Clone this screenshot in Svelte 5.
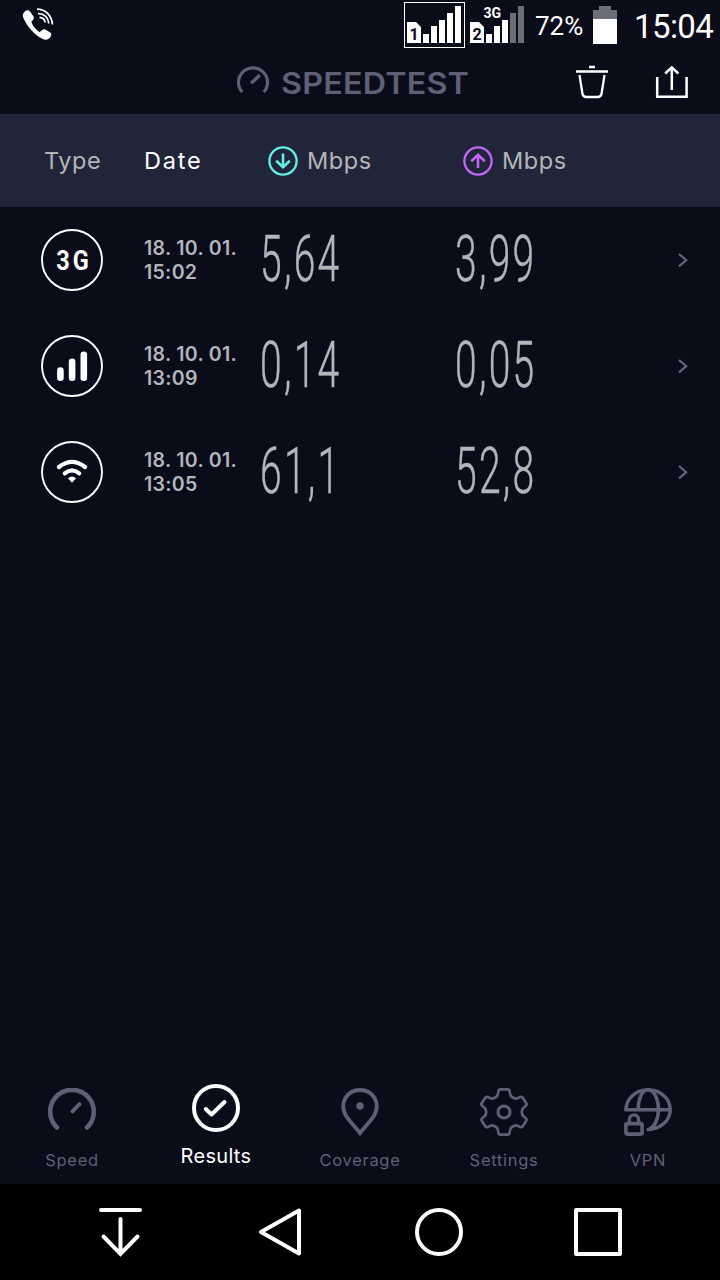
<script>
	const results = [
		{ type: '3g', date: '18. 10. 01.', time: '15:02', down: '5,64', up: '3,99' },
		{ type: 'cell', date: '18. 10. 01.', time: '13:09', down: '0,14', up: '0,05' },
		{ type: 'wifi', date: '18. 10. 01.', time: '13:05', down: '61,1', up: '52,8' }
	];

	const tabs = [
		{ id: 'speed', label: 'Speed' },
		{ id: 'results', label: 'Results' },
		{ id: 'coverage', label: 'Coverage' },
		{ id: 'settings', label: 'Settings' },
		{ id: 'vpn', label: 'VPN' }
	];

	let active = $state('results');
</script>

<div class="screen">
	<div class="status">
		<svg class="call" width="34" height="34" viewBox="0 0 34 34" fill="none">
			<path d="M3 4.5C4.5 2.3 7.5 1.4 8.8 3.2L12.6 8.5C13.5 10.2 12.2 12.2 10.4 13.6C11.3 18 15.3 22.4 18.8 24.2C20.5 22.2 22.5 20.6 24.3 21.5L29.6 24.7C31.2 26 29.9 28.8 28 30.6C26.3 32.2 23.5 31.9 20.8 30.4C13 26.5 5.5 17.5 2.2 9.4C1.4 7.2 1.8 5.8 3 4.5Z" fill="#fff"/>
			<path d="M16 1.2C24.5 1.2 30.6 7.5 31.5 16.5M17 5.5C23.5 5.8 27 9.5 27.8 15.5M18.5 9.3C22 9.6 23.8 11.3 24.2 14.5" stroke="#fff" stroke-width="1.7"/>
		</svg>
		<div class="indicators">
			<svg width="126" height="50" viewBox="0 0 126 50">
				<rect x="4.5" y="2.5" width="60" height="45" fill="none" stroke="#fff"/>
				<path d="M7 22h9l5 5v16H7zM23 34h6v9h-6zM31 26h6v17h-6zM39 20h6v23h-6zM47 13h6v30h-6zM55 6h6v37h-6z" fill="#fff"/>
				<path d="M70 22h9l5 5v16H70zM86 34h6v9h-6zM94 26h6v17h-6zM102 20h6v23h-6z" fill="#fff"/>
				<path d="M110 13h6v30h-6zM118 6h6v37h-6z" fill="#6c6d76"/>
				<text class="sim" x="9.5" y="40">1</text>
				<text class="sim" x="72.5" y="40">2</text>
				<text class="net" x="83.5" y="18">3G</text>
			</svg>
			<span class="percent">72%</span>
			<svg class="battery" width="24" height="38" viewBox="0 0 24 38">
				<path d="M6 0h12v4h6v9H0V4h6z" fill="#6c6d76"/>
				<rect y="13" width="24" height="25" fill="#fff"/>
			</svg>
			<span class="clock">15:04</span>
		</div>
	</div>

	<header class="topbar">
		<div class="brand">
			<svg width="34" height="32" viewBox="0 0 34 32" fill="none" stroke="currentColor" stroke-width="3.2">
				<path d="M6.2 26A14.5 14.5 0 1 1 27.8 26"/>
				<path d="M15.2 17.3L23.8 9" stroke-width="3.4"/>
			</svg>
			<h1>SPEEDTEST</h1>
		</div>
		<div class="actions">
			<button aria-label="Delete">
				<svg width="34" height="34" viewBox="0 0 34 34" fill="none" stroke="#fff" stroke-width="2.3">
					<path d="M1 6.5h32M14 2h6"/>
					<path d="M4.5 10L7.4 28.5Q8 32 11.5 32H22.5Q26 32 26.6 28.5L29.5 10"/>
				</svg>
			</button>
			<button aria-label="Share">
				<svg width="34" height="34" viewBox="0 0 34 34" fill="none" stroke="#fff" stroke-width="2.5">
					<path d="M2.2 12v19.8h29.4V12M16.8 25V2.5M10.2 8.5L16.8 2.4L23.4 8.5"/>
				</svg>
			</button>
		</div>
	</header>

	<div class="row head">
		<span class="col-type">Type</span>
		<span class="sorted">Date</span>
		<span class="unit">
			<svg width="30" height="30" viewBox="0 0 30 30" fill="none" stroke="#62efe3" stroke-width="2.3">
				<circle cx="15" cy="15" r="13.6"/>
				<path d="M15 7.5v14M8.2 14.8L15 21.3L21.8 14.8" stroke-width="2.6"/>
			</svg>
			Mbps
		</span>
		<span class="unit">
			<svg width="30" height="30" viewBox="0 0 30 30" fill="none" stroke="#c166f2" stroke-width="2.3">
				<circle cx="15" cy="15" r="13.6"/>
				<path d="M15 22V8.5M8.2 15.2L15 8.7L21.8 15.2" stroke-width="2.6"/>
			</svg>
			Mbps
		</span>
	</div>

	<main>
		{#each results as r}
			<div class="row result">
				<svg class="type" width="62" height="62" viewBox="0 0 62 62" fill="none" stroke="#fff">
					<circle cx="31" cy="31" r="30" stroke-width="1.9"/>
					{#if r.type === '3g'}
						<text class="type-text" transform="translate(15.3 41) scale(0.84 1)">3G</text>
					{:else if r.type === 'cell'}
						<path d="M19.4 35.5v7.3M31.1 26.8v16M42.8 19.8v23" stroke-width="6.6" stroke-linecap="round"/>
					{:else}
						<path d="M17.9 26Q31 15.7 44.1 26M23.8 32.4Q31 26.4 38.2 32.4" stroke-width="4.2" stroke-linecap="round"/>
						<path d="M27 37.4Q31 33.6 35 37.4L31 41.8Z" fill="#fff" stroke="none"/>
					{/if}
				</svg>
				<div class="when">
					<div>{r.date}</div>
					<div>{r.time}</div>
				</div>
				<span class="value">{r.down}</span>
				<span class="value">{r.up}</span>
				<svg class="chevron" width="12" height="16" viewBox="0 0 12 16" fill="none" stroke="#63647a" stroke-width="2.2">
					<path d="M2 2L9.2 8.2L2 14.4"/>
				</svg>
			</div>
		{/each}
	</main>

	<nav class="tabs">
		{#each tabs as tab}
			<button class="tab" class:active={active === tab.id} onclick={() => (active = tab.id)}>
				<svg width="48" height="48" viewBox="0 0 48 48" fill="none" stroke="currentColor" stroke-width="4" stroke-linecap="round" stroke-linejoin="round">
					{#if tab.id === 'speed'}
						<path d="M9 39.5A21.8 21.8 0 1 1 39 39.5" stroke-width="4.6"/>
						<path d="M24.5 23.3L31.5 16.2"/>
					{:else if tab.id === 'results'}
						<circle cx="24" cy="24" r="22"/>
						<path d="M13.8 25L19.5 30.5L32.5 18"/>
					{:else if tab.id === 'coverage'}
						<path d="M24 45C19.5 39.5 13 32.5 9.8 27.5C3 15 11 2 24 2S45 15 38.2 27.5C35 32.5 28.5 39.5 24 45Z" stroke-width="3.9" stroke-linejoin="miter"/>
						<circle cx="24" cy="18" r="3.7" fill="currentColor" stroke="none"/>
					{:else if tab.id === 'settings'}
						<path d="M20.3 1.3H27.7Q29 1.3 29.4 2.7L30.3 6.7Q30.6 8.2 32 9L34.3 10.3Q35.3 10.8 36.5 10.4L40.5 8.9Q42 8.5 42.8 9.8L46.3 15.3Q47 16.6 46 17.6L43 20.2Q42 21 42 22.3V25.7Q42 27 43 27.8L46 30.4Q47 31.4 46.3 32.7L42.8 38.2Q42 39.5 40.5 39.1L36.5 37.6Q35.3 37.2 34.3 37.7L32 39Q30.6 39.8 30.3 41.3L29.4 45.3Q29 46.7 27.7 46.7H20.3Q19 46.7 18.6 45.3L17.7 41.3Q17.4 39.8 16 39L13.7 37.7Q12.7 37.2 11.5 37.6L7.5 39.1Q6 39.5 5.2 38.2L1.7 32.7Q1 31.4 2 30.4L5 27.8Q6 27 6 25.7V22.3Q6 21 5 20.2L2 17.6Q1 16.6 1.7 15.3L5.2 9.8Q6 8.5 7.5 8.9L11.5 10.4Q12.7 10.8 13.7 10.3L16 9Q17.4 8.2 17.7 6.7L18.6 2.7Q19 1.3 20.3 1.3Z" stroke-width="2.7"/>
						<circle cx="24" cy="24" r="6.1" stroke-width="3"/>
					{:else}
						<path d="M1.8 21.7C2.5 10.5 12 1.8 24 1.8S46.2 10.5 46.2 21.7S36 41.2 24 41.5M1.8 21.7H46" stroke-width="3.5"/>
						<path d="M14.2 21C14.2 11 18 1.8 24 1.8S34.4 11 34.4 21.7S30 39 25.5 41" stroke-width="3.5"/>
						<rect x="1.9" y="35.6" width="16.2" height="10.5" rx="1.5" stroke-width="3.6"/>
						<path d="M5.4 34.5V31.500A4.6 4.6 0 0 1 14.6 31.500V34.5" stroke-width="3.3"/>
					{/if}
				</svg>
				<span>{tab.label}</span>
			</button>
		{/each}
	</nav>

	<div class="softkeys">
		<svg width="48" height="52" viewBox="0 0 48 52" fill="none" stroke="#fff" stroke-width="4" stroke-linecap="round">
			<path d="M5 4H44M24.5 13V48M7.5 30.500L24.5 48L41.5 30.500"/>
		</svg>
		<svg width="48" height="52" viewBox="0 0 48 52" fill="none" stroke="#fff" stroke-width="4" stroke-linejoin="round">
			<path d="M44 4.5V47.5L6 26Z"/>
		</svg>
		<svg width="48" height="52" viewBox="0 0 48 52" fill="none" stroke="#fff" stroke-width="4">
			<circle cx="24" cy="26" r="22"/>
		</svg>
		<svg width="48" height="52" viewBox="0 0 48 52" fill="none" stroke="#fff" stroke-width="4" stroke-linejoin="round">
			<rect x="2" y="4" width="44" height="44"/>
		</svg>
	</div>
</div>

<style>
	:global(body) {
		background: #0a0c1a;
	}

	.screen {
		width: 720px;
		height: 1280px;
		display: flex;
		flex-direction: column;
		background: #0a0c1a;
		color: #b4b5b9;
		font-family: Inter, 'Liberation Sans', sans-serif;
		overflow: hidden;
	}

	svg {
		display: block;
		flex-shrink: 0;
	}

	button {
		padding: 0;
		border: none;
		background: none;
		color: inherit;
		font-family: inherit;
		cursor: pointer;
	}

	.status {
		height: 50px;
		display: flex;
		justify-content: space-between;
		align-items: center;
		padding: 0 6px 0 21px;
		font-family: Roboto, sans-serif;
		color: #fff;
	}

	.indicators {
		display: flex;
		align-items: center;
	}

	.sim {
		font: 700 16px Roboto, sans-serif;
		fill: #0a0c1a;
	}

	.net {
		font: 700 14px Roboto, sans-serif;
		fill: #fff;
	}

	.percent {
		width: 58px;
		padding-left: 9px;
		box-sizing: border-box;
		font-size: 26px;
		line-height: 50px;
		padding-top: 2px;
	}

	.battery {
		margin-left: 9px;
	}

	.clock {
		margin-left: 17px;
		width: 80px;
		font-size: 33px;
		line-height: 50px;
		padding-top: 3px;
		letter-spacing: -0.6px;
	}

	.topbar {
		height: 64px;
		display: flex;
		justify-content: space-between;
		align-items: center;
		padding: 0 31px 0 236px;
	}

	.brand {
		display: flex;
		align-items: center;
		gap: 11px;
		color: #5f6075;
	}

	.brand h1 {
		margin: 0;
		font-size: 30px;
		line-height: 36px;
		font-weight: 600;
		padding-top: 2px;
		letter-spacing: 0.2px;
		transform: scaleX(1.075);
		transform-origin: left;
	}

	.actions {
		display: flex;
		gap: 46px;
	}

	.row {
		display: grid;
		grid-template-columns: 103px 116px 195px 1fr auto;
		align-items: center;
		padding: 0 31px 0 41px;
	}

	.head {
		height: 93px;
		background: #212539;
		font-size: 23.5px;
		letter-spacing: 0.6px;
	}

	.col-type {
		padding-left: 3px;
	}

	.sorted {
		color: #fff;
		letter-spacing: 1.8px;
	}

	.unit {
		display: flex;
		align-items: center;
		gap: 9px;
		padding-left: 8px;
	}

	main {
		flex: 1;
	}

	.result {
		height: 106px;
	}

	.type-text {
		font: 700 28px Roboto, sans-serif;
		letter-spacing: 3.5px;
		fill: #fff;
		stroke: none;
	}

	.when {
		font-size: 19.5px;
		font-weight: 600;
		line-height: 24px;
		letter-spacing: 0.3px;
	}

	.value {
		font-family: Roboto, sans-serif;
		font-size: 65px;
		font-weight: 300;
		line-height: 80px;
		letter-spacing: 3.8px;
		margin-top: -2px;
		-webkit-text-stroke: 0.5px currentColor;
		transform: scaleX(0.6);
		transform-origin: left;
	}

	.tabs {
		height: 114px;
		display: grid;
		grid-template-columns: repeat(5, 144px);
		color: #5f6075;
	}

	.tab {
		display: flex;
		flex-direction: column;
		align-items: center;
		padding-top: 18px;
		font-size: 16.5px;
		letter-spacing: 0.7px;
	}

	.tab span {
		margin-top: 14px;
		line-height: 20px;
	}

	.tab.active {
		padding-top: 14px;
		color: #fff;
		font-size: 20px;
		letter-spacing: 0.3px;
	}

	.tab.active span {
		margin-top: 13px;
		line-height: 22px;
	}

	.softkeys {
		height: 96px;
		display: flex;
		justify-content: space-between;
		align-items: center;
		padding: 0 98px 0 96px;
		background: #000;
	}
</style>
